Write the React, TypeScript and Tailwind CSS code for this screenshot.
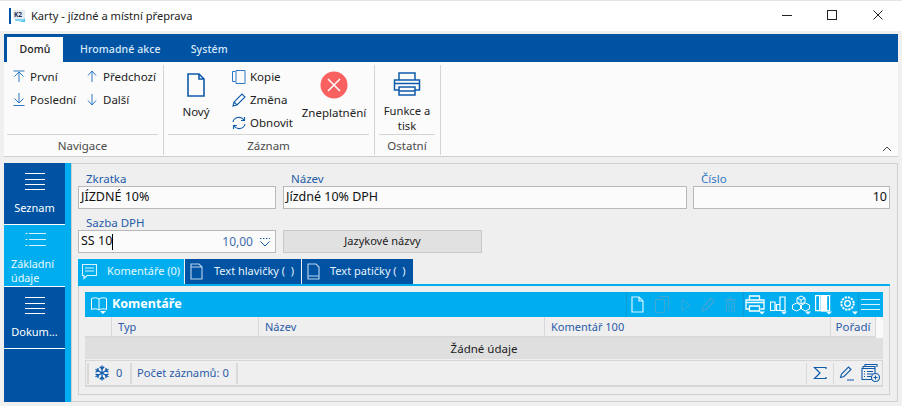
import React from "react";

const B = "#0f5bab";
const S = ({ w = 18, h = 18, vb, c = B, sw = 1.2, children, className = "" }: any) => (
  <svg width={w} height={h} viewBox={vb || `0 0 ${w} ${h}`} fill="none" stroke={c} strokeWidth={sw} className={"shrink-0 " + className}>{children}</svg>
);

const NavBtn = ({ kind, label }: { kind: string; label: string }) => (
  <div className="flex items-center h-[23px]">
    <S w={12} h={13} c="#2f78c4" sw={1}>
      {kind === "first" && <path d="M0.500 1h11M6 12V2M1.500 6.500 6 2l4.500 4.500" />}
      {kind === "prev" && <path d="M6 12V1M2 5.500 6 1l4 4.500" />}
      {kind === "next" && <path d="M6 1v11M2 7.500 6 12l4-4.500" />}
      {kind === "last" && <path d="M6 0v10M1.500 5.500 6 10l4.500-4.500M0.500 12.500h11" />}
    </S>
    <span className="ml-[5px]">{label}</span>
  </div>
);

const Group = ({ width, label, children }: any) => (
  <div className={`flex flex-col ${width} mr-[2px]`}>
    <div className="h-[72px] flex">{children}</div>
    <div className="mx-[3px] border-t border-[#d4d4d4] h-[22px] flex items-center justify-center text-[#4a4a4a] pt-[1px]">{label}</div>
  </div>
);

const Sep = () => <div className="w-px h-[90px] bg-[#d4d4d4] mt-[3px] mr-[1px]" />;

const Field = ({ label, width, right, value, labelColor = "text-[#1f5ca8]" }: any) => (
  <div className={`flex flex-col ${width}`}>
    <div className={`h-[16px] pl-[8px] leading-[18px] ${labelColor}`}>{label}</div>
    <div className={`h-[23px] border border-[#b9b9b9] bg-[#fbfbfb] flex items-center px-[2px] text-[#111] text-[12.500px] ${right ? "justify-end" : ""}`}>{value}</div>
  </div>
);

const Side = ({ label, active }: any) => (
  <div className={`h-[61px] mb-px flex flex-col items-center shrink-0 ${active ? "bg-[#00aeef]" : "bg-[#0053a3]"} text-white`}>
    {active ? (
      <div className="w-full flex flex-col items-center pt-[7px]">
        <S w={22} h={18} c="#d8f3ff" sw={1}>
          <path d="M1.500 1.500h2M1.500 7.500h2M1.500 13.500h2M5 1.500h17M5 7.500h17M5 13.500h17" />
        </S>
        <div className="self-start pl-[7px] mt-[7px] leading-[14px] text-[#eaf9ff] text-[10.800px]">{label}</div>
      </div>
    ) : (
      <div className="w-full flex flex-col items-center pt-[10px]">
        <S w={22} h={18} c="#fff" sw={1}><path d="M1 0.500h20M1 6.500h20M1 11.500h20M1 16.500h20" /></S>
        <div className="mt-[9px] leading-[16px]">{label}</div>
      </div>
    )}
  </div>
);

const Tab = ({ w, active, icon, label }: any) => (
  <div className={`${w} h-[25px] mr-px flex items-center whitespace-nowrap ${active ? "bg-[#00aeef] text-[#e6f8ff]" : "bg-[#0053a3] text-[#e6f2fb]"} text-[11px]`}>{icon}{label}</div>
);

const Caret = ({ x, y }: { x: number; y: number }) => <path d={`M${x} ${y}h6l-3 3z`} fill="#fff" stroke="none" />;

const Snow = () => (
  <S w={16} h={16} sw={1.300} className="ml-[5px] mr-[6px]">
    {[0, 60, 120, 180, 240, 300].map((r) => (
      <g key={r} transform={`rotate(${r} 8 8)`}>
        <path d="M8 8V0.500M5.800 1.800 8 4l2.200-2.200" />
      </g>
    ))}
  </S>
);

export default function App() {
  return (
    <div className="w-[902px] h-[406px] bg-[#f0f0f0] overflow-hidden flex flex-col text-[12px] text-[#1a1a1a] font-['Noto_Sans','Open_Sans',sans-serif]">
      {/* Title bar */}
      <div className="h-[31px] bg-white flex items-center shrink-0 border-t border-[#e4e4e4]">
        <div className="w-[2px] h-[16px] bg-[#0053a3] ml-[9px]" />
        <svg width="14" height="14" viewBox="0 0 14 14" className="ml-[1px]">
          <rect x="1" y="1" width="12" height="9" fill="#e6ebf0" />
          <path d="M5 13c4 0 7-1 8-4v4z" fill="#3cbcf0" />
          <rect x="3" y="10" width="9" height="2" fill="#7fd4f5" />
          <text x="2" y="8" fontSize="6.500" fontWeight="bold" fill="#1d2a56" stroke="none">K2</text>
        </svg>
        <span className="ml-[5px] text-[#222] text-[11.100px]">Karty - jízdné a místní přeprava</span>
        <div className="flex-1" />
        <div className="flex items-center mb-[2px]">
          <S w={10} h={10} c="#222" sw={1} className="mr-[35px]"><path d="M0 5.500h10" /></S>
          <S w={10} h={10} c="#222" sw={1} className="mr-[36px]"><rect x="0.500" y="0.500" width="9" height="9" /></S>
          <S w={10} h={10} c="#222" sw={1} className="mr-[19px]"><path d="M0.500 0.500l9 9M9.500 0.500l-9 9" /></S>
        </div>
      </div>
      <div className="h-[3px] shrink-0" />

      <div className="flex-1 flex flex-col px-[4px] min-h-0">
        {/* Ribbon tabs */}
        <div className="h-[28px] bg-[#0053a3] flex items-end text-[10.500px] font-medium tracking-[0.1px] text-[#dbeafa] shrink-0">
          <div className="ml-[3px] w-[56px] h-[25px] bg-[#fbfbfb] text-[#1a1a1a] flex items-center justify-center">Domů</div>
          <div className="ml-[17px] h-[25px] flex items-center">Hromadné akce</div>
          <div className="ml-[30px] h-[25px] flex items-center">Systém</div>
        </div>
        {/* Ribbon body */}
        <div className="h-[95px] bg-[#fbfbfb] border-b border-[#cfcfcf] flex shrink-0 text-[#222] text-[11.500px]">
          <Group width="w-[157px]" label="Navigace">
            <div className="flex flex-col pt-[3px] pl-[9px] w-[82px]">
              <NavBtn kind="first" label="První" />
              <NavBtn kind="last" label="Poslední" />
            </div>
            <div className="flex flex-col pt-[3px]">
              <NavBtn kind="prev" label="Předchozí" />
              <NavBtn kind="next" label="Další" />
            </div>
          </Group>
          <Sep />
          <Group width="w-[207px]" label="Záznam">
            <div className="w-[62px] flex flex-col items-center pt-[11px]">
              <S w={18} h={24} sw={1.600}><path d="M1 1h11l5 5v17H1zM12 1v5h5" /></S>
              <div className="mt-[6px]">Nový</div>
            </div>
            <div className="flex flex-col pt-[3px] w-[73px] pl-[4px]">
              <div className="flex items-center h-[23px]">
                <S w={16} h={16} c="#2f78c4" sw={1}><path d="M4.500 2.500h-3v10h3M5 1.500h9v13H5z" /></S>
                <span className="ml-[3px]">Kopie</span>
              </div>
              <div className="flex items-center h-[23px]">
                <S w={16} h={16} sw={1.100}><path d="M2 14l1-4 8-8 3 3-8 8-4 1zM3 10l3 3" /></S>
                <span className="ml-[3px]">Změna</span>
              </div>
              <div className="flex items-center h-[23px]">
                <S w={16} h={16} sw={1.100}><path d="M2 7a6 5.500 0 0 1 11-2M13.500 2v3.500H10M14 9a6 5.500 0 0 1-11 2M2.500 14v-3.500H6" /></S>
                <span className="ml-[3px]">Obnovit</span>
              </div>
            </div>
            <div className="w-[68px] flex flex-col items-center pt-[9px]">
              <svg width="28" height="28" viewBox="0 0 28 28" className="shrink-0">
                <circle cx="14" cy="14" r="13.500" fill="#f96060" />
                <path d="M8 8l12 12M20 8 8 20" stroke="#fff" strokeWidth="1.500" />
              </svg>
              <div className="mt-[5px]">Zneplatnění</div>
            </div>
          </Group>
          <Sep />
          <Group width="w-[62px]" label="Ostatní">
            <div className="w-full flex flex-col items-center pt-[10px]">
              <S w={28} h={24} sw={1.500}>
                <path d="M6 8V1h16v7M6 18H1.500V8h25v10H22" />
                <path d="M2 11.500h24" />
                <path d="M6 15h16v8H6zM6 19h16" />
              </S>
              <div className="mt-[7px] text-center leading-[15px] text-[11.200px]">Funkce a<br />tisk</div>
            </div>
          </Group>
          <Sep />
          <div className="flex-1 flex items-end justify-end pb-[4px] pr-[6px]">
            <S w={10} h={6} c="#444" sw={1}><path d="M1 5l4-4 4 4" /></S>
          </div>
        </div>
        <div className="h-[6px] shrink-0" />

        {/* Main */}
        <div className="flex-1 flex min-h-0 mb-[4px]">
          <div className="w-[61px] bg-[#0053a3] flex flex-col shrink-0 text-[11px]">
            <div className="bg-white"><Side label="Seznam" /></div>
            <div className="bg-white"><Side label={<>Základní<br />údaje</>} active /></div>
            <div className="bg-white"><Side label="Dokum..." /></div>
          </div>
          <div className="w-[6px] bg-[#00aeef] shrink-0" />
          <div className="flex-1 border border-[#cfcfcf] bg-[#efefef] pl-[6px] pr-[7px] pt-[6px] pb-[6px] flex flex-col min-w-0 text-[11.500px]">
            <div className="flex">
              <Field label="Zkratka" width="w-[198px]" value="JÍZDNÉ 10%" />
              <div className="w-[7px]" />
              <Field label="Název" width="w-[404px]" value="Jízdné 10% DPH" />
              <div className="w-[6px]" />
              <Field label="Číslo" width="w-[197px]" value="10" right labelColor="text-[#2f78c4]" />
            </div>
            <div className="flex mt-[5px]">
              <div className="flex flex-col w-[198px]">
                <div className="h-[16px] pl-[8px] leading-[18px] text-[#1f5ca8]">Sazba DPH</div>
                <div className="h-[23px] border border-[#b9b9b9] bg-[#fbfbfb] flex items-center px-[2px] text-[#111] text-[12.500px]">
                  SS 10<span className="w-px h-[16px] bg-black" />
                  <span className="flex-1 text-right text-[#3f6cae] text-[12px] mr-[6px]">10,00</span>
                  <S w={12} h={10} sw={1} className="mr-[2px]"><path d="M1 1.500h1.500M4 1.500h1.500M7 1.500h1.500M10 1.500h1M1.500 4.500 6 9l4.500-4.500" /></S>
                </div>
              </div>
              <div className="w-[7px]" />
              <div className="mt-[16px] w-[199px] h-[23px] bg-[#e1e1e1] border border-[#c8c8c8] flex items-center justify-center text-[11px] text-[#222]">Jazykové názvy</div>
            </div>
            <div className="flex mt-[6px] border-b-2 border-[#00aeef] shrink-0">
              <Tab w="w-[106px]" active icon={<S w={17} h={18} c="#d9f4ff" sw={1.100} className="ml-[3px] mr-[9px]"><path d="M1.500 1.500h14v11H6l-3 3v-3H1.500zM4 5h9M4 8h9" /></S>} label="Komentáře (0)" />
              <Tab w="w-[116px]" icon={<S w={13} h={17} c="#cfe4f5" sw={1.100} className="ml-[5px] mr-[11px]"><path d="M1 1h8l3 3v12H1zM1 4h11" opacity="0.900" /></S>} label={"Text hlavičky ( \u00a0)"} />
              <Tab w="w-[111px]" icon={<S w={13} h={17} c="#cfe4f5" sw={1.100} className="ml-[5px] mr-[10px]"><path d="M1 1h8l3 3v12H1zM1 13h11" opacity="0.900" /></S>} label={"Text patičky ( \u00a0)"} />
            </div>
            <div className="flex-1 border border-t-0 border-[#cfcfcf] px-[6px] pt-[6px] pb-[7px] flex flex-col min-h-0">
              <div className="h-[25px] bg-[#00aeef] flex items-center text-white shrink-0">
                <S w={18} h={18} c="#fff" sw={1} className="ml-[5px] mr-[4px]"><path d="M9 3C7 1.500 4 1.500 1.500 2.500v11C4 12.500 7 12.500 9 14c2-1.500 5-1.500 7.500-.5v-11C14 1.500 11 1.500 9 3zM9 3v11" /><Caret x={10} y={15} /></S>
                <span className="font-bold text-[12.500px]">Komentáře</span>
                <div className="flex-1" />
                <div className="flex items-center">
                  <div className="w-px h-[25px] bg-[#0d9cd6] mr-[4px]" />
                  <S w={13} h={17} c="#d5f3ff" sw={1.200} className="mr-[11px]"><path d="M1 1h7l4 4v11H1zM8 1v4h4" /></S>
                  <S w={14} h={17} c="#3fa6d6" sw={1} className="mr-[12px]"><path d="M0.500 3.500h9v13h-9zM3.500 0.500h10v13" /></S>
                  <S w={10} h={14} c="#3fa6d6" sw={1} className="mr-[10px]"><path d="M1 1.500l8 5.500-8 5.500z" /></S>
                  <S w={14} h={15} c="#3fa6d6" sw={1.300} className="mr-[10px]"><path d="M1 14l1-4 8-8.500 3 3-8 8z" /></S>
                  <S w={11} h={15} c="#3fa6d6" sw={1} className="mr-[7px]"><path d="M1.500 4h8v10h-8zM0 2.500h11M4 1h3M4 6v6M7 6v6" /></S>
                  <div className="w-px h-[25px] bg-[#0d9cd6] mr-[1px]" />
                  <S w={21} h={20} c="#fff" sw={1.300} className="mr-[4px]"><path d="M4.500 5V1h10v4M4.500 14H1V5h18v9h-3.500M1 7.500h18M4.500 11h10v5h-10z" /><Caret x={14} y={16.500} /></S>
                  <S w={18} h={20} c="#fff" sw={1.200} className="mr-[4px]"><path d="M0.500 7h4.500v8.500H0.500zM6.500 9.500H10v6H6.500zM10 2h5v13.500h-5z" /><Caret x={11} y={16.500} /></S>
                  <S w={20} h={20} c="#fff" sw={1} className="mr-[3px]"><path d="M9 1 13 3v4L9 9 5 7V3zM5 3l4 2 4-2M9 5v4M4.500 8 8.500 10v4l-4 2-4-2v-4zM13.500 8l4 2v4l-4 2-4-2v-4z" /><Caret x={13} y={16.500} /></S>
                  <S w={18} h={20} c="#fff" sw={1.200} className="mr-[6px]"><path d="M0.600 0.600h4v15h-4zM6.600 0.600h4v15h-4zM11.600 0.600h3v15h-3z" /><rect x="6" y="0" width="5" height="16" fill="#fff" /><Caret x={11} y={16.500} /></S>
                  <S w={19} h={20} c="#fff" sw={1.300}><circle cx="8.500" cy="8.500" r="6.200" strokeDasharray="2.200 1" strokeWidth="2" /><circle cx="8.500" cy="8.500" r="2.800" /><Caret x={13} y={16.500} /></S>
                  <div className="w-px h-[25px] bg-[#0d9cd6] mr-[2px]" />
                  <S w={19} h={13} c="#d8f3ff" sw={1}><path d="M0 1.500h19M0 6.500h19M0 11.500h19" /></S>
                  <div className="w-[3px]" />
                </div>
              </div>
              <div className="h-[21px] flex text-[#2a5ba8] text-[11px] shrink-0 bg-[#f9f9f9]">
                <div className="w-[27px] h-full border-r border-b-2 border-[#d9d9d9] bg-[#efefef]" />
                <div className="w-[147px] h-full border-r border-b-2 border-[#d9d9d9] bg-[#efefef] pl-[6px] leading-[20px]">Typ</div>
                <div className="w-[286px] h-full border-r border-b-2 border-[#d9d9d9] bg-[#efefef] pl-[6px] leading-[20px]">Název</div>
                <div className="w-[286px] h-full border-r border-b-2 border-[#d9d9d9] bg-[#efefef] pl-[6px] leading-[20px]">Komentář 100</div>
                <div className="w-[45px] h-full border-r border-b-2 border-[#d9d9d9] bg-[#efefef] text-center leading-[20px] text-[11.500px]">Pořadí</div>
              </div>
              <div className="h-[21px] bg-[#dfdfdf] border-b-2 border-[#efefef] box-content flex items-center justify-center text-[#222] shrink-0">Žádné údaje</div>
              <div className="flex-1 border-t border-b-2 border-x border-[#d6d6d6] -mt-px flex items-center pl-[1px] text-[11px] min-h-0">
                <div className="w-[2px] h-[21px] bg-[#d9d9d9]" />
                <div className="w-[43px] h-[21px] border-r-2 border-[#d9d9d9] flex items-center text-[#2a5ba8]">
                  <Snow />0
                </div>
                <div className="w-[106px] h-[21px] border-r-2 border-[#d9d9d9] pl-[5px] leading-[20px] text-[#2a5ba8] text-[11.200px] whitespace-nowrap">Počet záznamů: 0</div>
                <div className="flex-1" />
                <div className="w-px h-[21px] bg-[#d9d9d9]" />
                <S w={14} h={14} sw={1.200} className="mx-[6px]"><path d="M13 3V1.500H1.500L7 7l-5.500 5.500H13V11" /></S>
                <div className="w-px h-[21px] bg-[#d9d9d9]" />
                <S w={16} h={16} sw={1.100} className="ml-[5px] mr-[6px]"><path d="M1.500 12.500l1-3.500 7-7 2.500 2.500-7 7zM8 15h7" /></S>
                <S w={20} h={20} sw={1.100} className="mr-[1px]"><path d="M4 3V1.500h12V4M2 5V3.500h12V5" /><path d="M1 5.500h13v11H1zM3 8.500h1M3 11h1M3 13.500h1M6 8.500h6M6 11h6M6 13.500h4" /><circle cx="14.500" cy="14.500" r="4" fill="#efefef" /><path d="M14.500 12.500v4M12.500 14.500h4" /></S>
              </div>
            </div>
          </div>
        </div>
      </div>
    </div>
  );
}
